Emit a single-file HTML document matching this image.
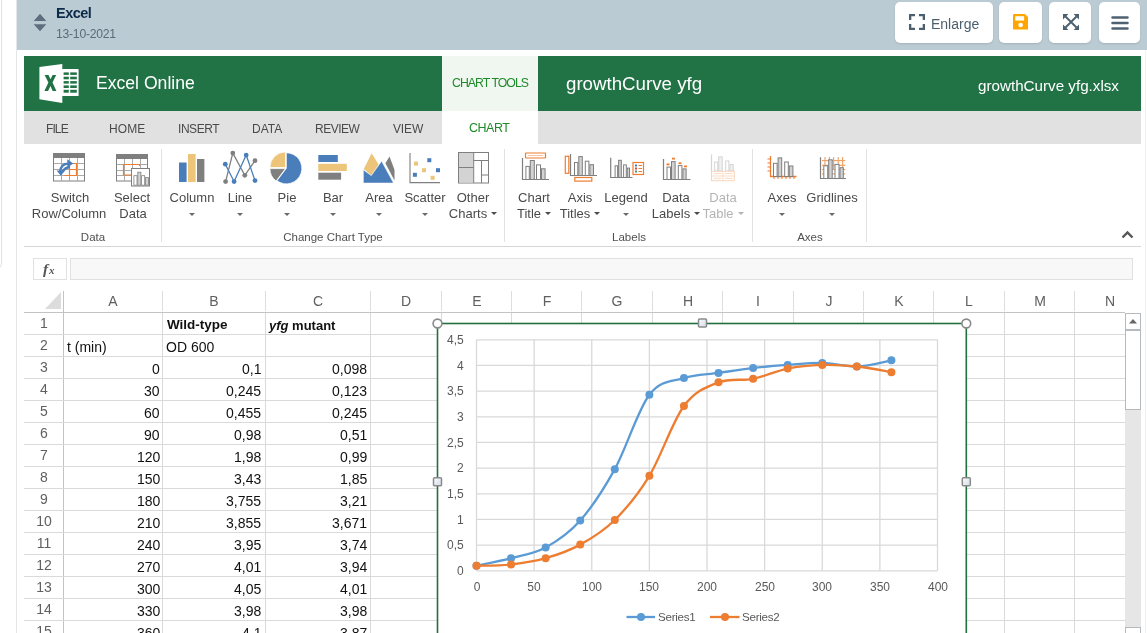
<!DOCTYPE html>
<html><head><meta charset="utf-8"><style>
html,body{margin:0;padding:0;width:1147px;height:633px;overflow:hidden;background:#fff;position:relative}
body{font-family:"Liberation Sans", sans-serif}
.t{will-change:transform}
.t{position:absolute;white-space:nowrap}
</style></head><body>
<div style="position:absolute;left:-8px;top:-5px;width:8px;height:271px;border:1px solid #dde2e5;border-radius:4px;background:#fff"></div>
<div style="position:absolute;left:16px;top:0px;width:1px;height:633px;background:#e3e7ea"></div>
<div style="position:absolute;left:17px;top:0px;width:1130px;height:50px;background:#bbcbd3"></div>
<svg style="position:absolute;left:33px;top:13px" width="14" height="19" viewBox="0 0 14 19"><path d="M0.7 8 L7 0.8 L13.3 8 Z" fill="#5d6f7e"/><path d="M0.7 11.2 L7 18.2 L13.3 11.2 Z" fill="#5d6f7e"/></svg>
<div class="t" style="left:55.5px;top:6.4px;font-size:14.5px;line-height:14.5px;color:#0c2b49;font-weight:700;letter-spacing:-0.5px">Excel</div>
<div class="t" style="left:55.5px;top:28.2px;font-size:12.2px;line-height:12.2px;color:#5b6b7a;font-weight:400;letter-spacing:-0.25px">13-10-2021</div>
<div style="position:absolute;left:895px;top:2px;width:98px;height:41px;background:#fff;border-radius:5px;box-shadow:0 1px 2px rgba(0,0,0,0.12)"></div>
<div style="position:absolute;left:999px;top:2px;width:43px;height:41px;background:#fff;border-radius:5px;box-shadow:0 1px 2px rgba(0,0,0,0.12)"></div>
<div style="position:absolute;left:1049px;top:2px;width:42px;height:41px;background:#fff;border-radius:5px;box-shadow:0 1px 2px rgba(0,0,0,0.12)"></div>
<div style="position:absolute;left:1099px;top:2px;width:41px;height:41px;background:#fff;border-radius:5px;box-shadow:0 1px 2px rgba(0,0,0,0.12)"></div>
<svg style="position:absolute;left:909px;top:14px" width="16" height="16" viewBox="0 0 16 16" fill="none" stroke="#4b5f6e" stroke-width="2.3"><path d="M1.15 6V1.15H6"/><path d="M10 1.15H14.85V6"/><path d="M14.85 10V14.85H10"/><path d="M6 14.85H1.15V10"/></svg>
<div class="t" style="left:931.0px;top:16.9px;font-size:14px;line-height:14px;color:#4b5f6e;font-weight:400;">Enlarge</div>
<svg style="position:absolute;left:1012.8px;top:14.3px" width="15.5" height="15.5" viewBox="0 0 16 16"><path d="M1.3 0H12.3L16 3.7V14.7Q16 16 14.7 16H1.3Q0 16 0 14.7V1.3Q0 0 1.3 0Z" fill="#ffa500"/><rect x="2.3" y="2.3" width="9.2" height="4.5" fill="#fff"/><circle cx="7.9" cy="11.4" r="2.4" fill="#fff"/></svg>
<svg style="position:absolute;left:1063px;top:14px" width="16" height="16" viewBox="0 0 16 16" fill="#4b5f6e"><path d="M2.5 2.5L13.5 13.5M13.5 2.5L2.5 13.5" stroke="#4b5f6e" stroke-width="1.9"/><path d="M0 0H5.4L0 5.4Z"/><path d="M16 0H10.6L16 5.4Z"/><path d="M0 16H5.4L0 10.6Z"/><path d="M16 16H10.6L16 10.6Z"/></svg>
<svg style="position:absolute;left:1111px;top:15px" width="18" height="16" viewBox="0 0 18 16" stroke="#4d6272" stroke-width="2.5" stroke-linecap="round"><path d="M1.5 2.5H16.5M1.5 8H16.5M1.5 13.5H16.5"/></svg>
<div style="position:absolute;left:1145px;top:50px;width:1px;height:583px;background:#eef0f2"></div>
<div style="position:absolute;left:24px;top:56px;width:1117px;height:55px;background:#217346"></div>
<svg style="position:absolute;left:38px;top:63px" width="42" height="41" viewBox="0 0 42 41">
<rect x="24" y="6.1" width="16.6" height="27" rx="0.6" fill="#fff"/>
<g fill="#217346"><rect x="25.6" y="9.4" width="5.2" height="2.5"/><rect x="32.2" y="9.4" width="6.6" height="2.5"/><rect x="25.6" y="13.7" width="5.2" height="2.6"/><rect x="32.2" y="13.7" width="6.6" height="2.6"/><rect x="25.6" y="18.1" width="5.2" height="2.5"/><rect x="32.2" y="18.1" width="6.6" height="2.5"/><rect x="25.6" y="22.4" width="5.2" height="2.6"/><rect x="32.2" y="22.4" width="6.6" height="2.6"/><rect x="25.6" y="26.8" width="5.2" height="2.9"/><rect x="32.2" y="26.8" width="6.6" height="2.9"/></g>
<path d="M1.4 4 L24.3 1 V40 L1.4 36.2 Z" fill="#fff"/>
<path fill="#217346" d="M6.6 11.9H10.5L12.5 16.3L14.6 11.9H18.2L14.5 19.4L18.4 27.9H14.7L12.4 23L10.1 27.9H6.4L10.4 19.4Z"/>
</svg>
<div class="t" style="left:96.0px;top:74.8px;font-size:17.6px;line-height:17.6px;color:#fff;font-weight:400;">Excel Online</div>
<div style="position:absolute;left:442px;top:56px;width:96px;height:55px;background:#f0f7f0"></div>
<div class="t" style="left:452.0px;top:77.0px;font-size:12.3px;line-height:12.3px;color:#1f8a2a;font-weight:400;letter-spacing:-0.95px">CHART TOOLS</div>
<div class="t" style="left:566.0px;top:75.1px;font-size:18.7px;line-height:18.7px;color:#fff;font-weight:400;">growthCurve yfg</div>
<div class="t" style="right:28.0px;text-align:right;top:78.1px;font-size:15.2px;line-height:15.2px;color:#fff;font-weight:400;">growthCurve yfg.xlsx</div>
<div style="position:absolute;left:24px;top:111px;width:1117px;height:33px;background:#e1e1e1"></div>
<div class="t" style="left:45.5px;top:123.4px;font-size:12px;line-height:12px;color:#4a4a4a;font-weight:400;letter-spacing:-0.9px">FILE</div>
<div class="t" style="left:109.3px;top:123.4px;font-size:12px;line-height:12px;color:#4a4a4a;font-weight:400;letter-spacing:0.1px">HOME</div>
<div class="t" style="left:178.3px;top:123.4px;font-size:12px;line-height:12px;color:#4a4a4a;font-weight:400;letter-spacing:-0.45px">INSERT</div>
<div class="t" style="left:252.3px;top:123.4px;font-size:12px;line-height:12px;color:#4a4a4a;font-weight:400;letter-spacing:0px">DATA</div>
<div class="t" style="left:315.3px;top:123.4px;font-size:12px;line-height:12px;color:#4a4a4a;font-weight:400;letter-spacing:-0.5px">REVIEW</div>
<div class="t" style="left:392.6px;top:123.4px;font-size:12px;line-height:12px;color:#4a4a4a;font-weight:400;letter-spacing:-0.15px">VIEW</div>
<div style="position:absolute;left:442px;top:111px;width:96px;height:33px;background:#fff"></div>
<div class="t" style="left:469.0px;top:122.4px;font-size:12.5px;line-height:12.5px;color:#1f8a2a;font-weight:400;letter-spacing:-0.5px">CHART</div>
<div style="position:absolute;left:24px;top:246px;width:1117px;height:1px;background:#d6d6d6"></div>
<div style="position:absolute;left:161px;top:149px;width:1px;height:93px;background:#e1e1e1"></div>
<div style="position:absolute;left:504px;top:149px;width:1px;height:93px;background:#e1e1e1"></div>
<div style="position:absolute;left:752px;top:149px;width:1px;height:93px;background:#e1e1e1"></div>
<div style="position:absolute;left:866px;top:149px;width:1px;height:93px;background:#e1e1e1"></div>
<div class="t" style="left:-230.5px;width:600px;text-align:center;top:190.9px;font-size:13px;line-height:13px;color:#4a4a4a;font-weight:400;">Switch</div>
<div class="t" style="left:-231.0px;width:600px;text-align:center;top:206.9px;font-size:13px;line-height:13px;color:#4a4a4a;font-weight:400;">Row/Column</div>
<div class="t" style="left:-168.0px;width:600px;text-align:center;top:190.9px;font-size:13px;line-height:13px;color:#4a4a4a;font-weight:400;">Select</div>
<div class="t" style="left:-167.5px;width:600px;text-align:center;top:206.9px;font-size:13px;line-height:13px;color:#4a4a4a;font-weight:400;">Data</div>
<div class="t" style="left:-207.5px;width:600px;text-align:center;top:232.2px;font-size:11.5px;line-height:11.5px;color:#505050;font-weight:400;">Data</div>
<div class="t" style="left:-108.0px;width:600px;text-align:center;top:190.9px;font-size:13px;line-height:13px;color:#4a4a4a;font-weight:400;">Column</div>
<div style="position:absolute;left:189px;top:213.1px;width:0px;height:0px;border-left:3px solid transparent;border-right:3px solid transparent;border-top:3px solid #6a6a6a"></div>
<div class="t" style="left:-60.0px;width:600px;text-align:center;top:190.9px;font-size:13px;line-height:13px;color:#4a4a4a;font-weight:400;">Line</div>
<div style="position:absolute;left:237px;top:213.1px;width:0px;height:0px;border-left:3px solid transparent;border-right:3px solid transparent;border-top:3px solid #6a6a6a"></div>
<div class="t" style="left:-13.4px;width:600px;text-align:center;top:190.9px;font-size:13px;line-height:13px;color:#4a4a4a;font-weight:400;">Pie</div>
<div style="position:absolute;left:283.6px;top:213.1px;width:0px;height:0px;border-left:3px solid transparent;border-right:3px solid transparent;border-top:3px solid #6a6a6a"></div>
<div class="t" style="left:33.0px;width:600px;text-align:center;top:190.9px;font-size:13px;line-height:13px;color:#4a4a4a;font-weight:400;">Bar</div>
<div style="position:absolute;left:330px;top:213.1px;width:0px;height:0px;border-left:3px solid transparent;border-right:3px solid transparent;border-top:3px solid #6a6a6a"></div>
<div class="t" style="left:79.0px;width:600px;text-align:center;top:190.9px;font-size:13px;line-height:13px;color:#4a4a4a;font-weight:400;">Area</div>
<div style="position:absolute;left:376px;top:213.1px;width:0px;height:0px;border-left:3px solid transparent;border-right:3px solid transparent;border-top:3px solid #6a6a6a"></div>
<div class="t" style="left:125.0px;width:600px;text-align:center;top:190.9px;font-size:13px;line-height:13px;color:#4a4a4a;font-weight:400;">Scatter</div>
<div style="position:absolute;left:422px;top:213.1px;width:0px;height:0px;border-left:3px solid transparent;border-right:3px solid transparent;border-top:3px solid #6a6a6a"></div>
<div class="t" style="left:173.4px;width:600px;text-align:center;top:190.9px;font-size:13px;line-height:13px;color:#4a4a4a;font-weight:400;">Other</div>
<div class="t" style="left:172.8px;width:600px;text-align:center;top:206.9px;font-size:13px;line-height:13px;color:#4a4a4a;font-weight:400;">Charts<span style="display:inline-block;width:0;height:0;border-left:3px solid transparent;border-right:3px solid transparent;border-top:3px solid #4a4a4a;vertical-align:middle;margin-left:4px;position:relative;top:-1px"></span></div>
<div class="t" style="left:33.0px;width:600px;text-align:center;top:232.2px;font-size:11.5px;line-height:11.5px;color:#505050;font-weight:400;">Change Chart Type</div>
<div class="t" style="left:233.6px;width:600px;text-align:center;top:190.9px;font-size:13px;line-height:13px;color:#4a4a4a;font-weight:400;">Chart</div>
<div class="t" style="left:234.0px;width:600px;text-align:center;top:206.9px;font-size:13px;line-height:13px;color:#4a4a4a;font-weight:400;">Title<span style="display:inline-block;width:0;height:0;border-left:3px solid transparent;border-right:3px solid transparent;border-top:3px solid #4a4a4a;vertical-align:middle;margin-left:4px;position:relative;top:-1px"></span></div>
<div class="t" style="left:279.8px;width:600px;text-align:center;top:190.9px;font-size:13px;line-height:13px;color:#4a4a4a;font-weight:400;">Axis</div>
<div class="t" style="left:280.2px;width:600px;text-align:center;top:206.9px;font-size:13px;line-height:13px;color:#4a4a4a;font-weight:400;">Titles<span style="display:inline-block;width:0;height:0;border-left:3px solid transparent;border-right:3px solid transparent;border-top:3px solid #4a4a4a;vertical-align:middle;margin-left:4px;position:relative;top:-1px"></span></div>
<div class="t" style="left:326.3px;width:600px;text-align:center;top:190.9px;font-size:13px;line-height:13px;color:#4a4a4a;font-weight:400;">Legend</div>
<div style="position:absolute;left:623.3px;top:213.1px;width:0px;height:0px;border-left:3px solid transparent;border-right:3px solid transparent;border-top:3px solid #6a6a6a"></div>
<div class="t" style="left:375.6px;width:600px;text-align:center;top:190.9px;font-size:13px;line-height:13px;color:#4a4a4a;font-weight:400;">Data</div>
<div class="t" style="left:375.6px;width:600px;text-align:center;top:206.9px;font-size:13px;line-height:13px;color:#4a4a4a;font-weight:400;">Labels<span style="display:inline-block;width:0;height:0;border-left:3px solid transparent;border-right:3px solid transparent;border-top:3px solid #4a4a4a;vertical-align:middle;margin-left:4px;position:relative;top:-1px"></span></div>
<div class="t" style="left:423.3px;width:600px;text-align:center;top:190.9px;font-size:13px;line-height:13px;color:#b4b4b4;font-weight:400;">Data</div>
<div class="t" style="left:423.3px;width:600px;text-align:center;top:206.9px;font-size:13px;line-height:13px;color:#b4b4b4;font-weight:400;">Table<span style="display:inline-block;width:0;height:0;border-left:3px solid transparent;border-right:3px solid transparent;border-top:3px solid #b4b4b4;vertical-align:middle;margin-left:4px;position:relative;top:-1px"></span></div>
<div class="t" style="left:328.8px;width:600px;text-align:center;top:232.2px;font-size:11.5px;line-height:11.5px;color:#505050;font-weight:400;">Labels</div>
<div class="t" style="left:481.6px;width:600px;text-align:center;top:190.9px;font-size:13px;line-height:13px;color:#4a4a4a;font-weight:400;">Axes</div>
<div style="position:absolute;left:778.6px;top:213.1px;width:0px;height:0px;border-left:3px solid transparent;border-right:3px solid transparent;border-top:3px solid #6a6a6a"></div>
<div class="t" style="left:532.0px;width:600px;text-align:center;top:190.9px;font-size:13px;line-height:13px;color:#4a4a4a;font-weight:400;">Gridlines</div>
<div style="position:absolute;left:829px;top:213.1px;width:0px;height:0px;border-left:3px solid transparent;border-right:3px solid transparent;border-top:3px solid #6a6a6a"></div>
<div class="t" style="left:509.7px;width:600px;text-align:center;top:232.2px;font-size:11.5px;line-height:11.5px;color:#505050;font-weight:400;">Axes</div>
<svg style="position:absolute;left:1121px;top:229px" width="13" height="10" viewBox="0 0 13 10"><path d="M1.5 8.5L6.5 3.5L11.5 8.5" fill="none" stroke="#555" stroke-width="2.4"/></svg>
<svg style="position:absolute;left:0;top:0" width="1147" height="200" viewBox="0 0 1147 200">
<rect x="53.5" y="153.5" width="31" height="27.5" fill="#fff" stroke="#7f7f7f" stroke-width="1"/>
<rect x="53" y="153" width="32" height="5" fill="#7f7f7f"/>
<line x1="61.5" y1="158" x2="61.5" y2="181" stroke="#ababab" stroke-width="1"/>
<line x1="69.5" y1="158" x2="69.5" y2="181" stroke="#ababab" stroke-width="1"/>
<line x1="77.5" y1="158" x2="77.5" y2="181" stroke="#ababab" stroke-width="1"/>
<line x1="54" y1="163.5" x2="84" y2="163.5" stroke="#ababab" stroke-width="1"/>
<line x1="54" y1="169.5" x2="84" y2="169.5" stroke="#ababab" stroke-width="1"/>
<line x1="54" y1="175.5" x2="84" y2="175.5" stroke="#ababab" stroke-width="1"/>
<path d="M69.5 163.5H76.5V175.5H64.5M69.5 163.5V175.5M69.5 169.5H76.5" fill="none" stroke="#ed7d31" stroke-width="1.2"/>
<path d="M60.2 171.5 Q60.9 163.6 68.5 163.6" fill="none" stroke="#4a7ebb" stroke-width="2.3"/>
<path d="M67.3 159.3L73.3 163.5L67.3 167.6Z" fill="#4a7ebb"/>
<path d="M70 167 Q65 167.4 62.3 172" fill="none" stroke="#4a7ebb" stroke-width="2.3"/>
<path d="M56.6 170.6L60.9 175.8L65 170.6Z" fill="#4a7ebb"/>
<rect x="116.5" y="154.5" width="31" height="26.5" fill="#fff" stroke="#7f7f7f" stroke-width="1"/>
<rect x="116" y="154" width="32" height="5" fill="#7f7f7f"/>
<line x1="124.5" y1="159" x2="124.5" y2="181" stroke="#ababab" stroke-width="1"/>
<line x1="132.5" y1="159" x2="132.5" y2="181" stroke="#ababab" stroke-width="1"/>
<line x1="140.5" y1="159" x2="140.5" y2="181" stroke="#ababab" stroke-width="1"/>
<line x1="117" y1="164.5" x2="147" y2="164.5" stroke="#ababab" stroke-width="1"/>
<line x1="117" y1="170.5" x2="147" y2="170.5" stroke="#ababab" stroke-width="1"/>
<line x1="117" y1="175.5" x2="147" y2="175.5" stroke="#ababab" stroke-width="1"/>
<path d="M139.5 166V164.5H123.5V175H131" fill="none" stroke="#ed7d31" stroke-width="1.2"/>
<rect x="131.5" y="168.5" width="18" height="17.5" fill="#fff" stroke="#7f7f7f" stroke-width="1"/>
<rect x="133.9" y="175.70000000000002" width="3.1" height="9.5" fill="#fff" stroke="#7f7f7f" stroke-width="0.8"/>
<rect x="137.8" y="172.20000000000002" width="3.1" height="13.0" fill="#d3d3d3" stroke="#7f7f7f" stroke-width="0.8"/>
<rect x="141.6" y="175.70000000000002" width="3.1" height="9.5" fill="#fff" stroke="#7f7f7f" stroke-width="0.8"/>
<rect x="145.4" y="177.6" width="3.1" height="7.600000000000023" fill="#d3d3d3" stroke="#7f7f7f" stroke-width="0.8"/>
<rect x="179" y="162.5" width="7.6" height="19.5" fill="#4a7ebb"/>
<rect x="188" y="154" width="7.6" height="28" fill="#ecc57b"/>
<rect x="197" y="159" width="7.4" height="23" fill="#7f7f7f"/>
<polyline points="225.6,181.6 232.8,153.1 244.8,175.3 255,160.7" fill="none" stroke="#7f7f7f" stroke-width="1.3"/>
<circle cx="225.6" cy="181.6" r="2.4" fill="#7f7f7f"/>
<circle cx="232.8" cy="153.1" r="2.4" fill="#7f7f7f"/>
<circle cx="244.8" cy="175.3" r="2.4" fill="#7f7f7f"/>
<circle cx="255" cy="160.7" r="2.4" fill="#7f7f7f"/>
<polyline points="225.3,164.2 234.1,181.6 246.2,155.1 255,180.6" fill="none" stroke="#4a7ebb" stroke-width="1.3"/>
<circle cx="225.3" cy="164.2" r="2.4" fill="#4a7ebb"/>
<circle cx="234.1" cy="181.6" r="2.4" fill="#4a7ebb"/>
<circle cx="246.2" cy="155.1" r="2.4" fill="#4a7ebb"/>
<circle cx="255" cy="180.6" r="2.4" fill="#4a7ebb"/>
<path d="M286.3 168.3 L286.30 152.70 A15.6 15.6 0 1 1 276.91 180.76 Z" fill="#4a7ebb" stroke="#fff" stroke-width="0.8"/>
<path d="M285.5 168.60000000000002 L276.11 181.06 A15.6 15.6 0 0 1 269.90 168.60 Z" fill="#7f7f7f" stroke="#fff" stroke-width="0.8"/>
<path d="M285.5 167.5 L269.90 167.50 A15.6 15.6 0 0 1 285.50 151.90 Z" fill="#ecc57b" stroke="#fff" stroke-width="0.8"/>
<rect x="318.3" y="155" width="19.5" height="7" fill="#4a7ebb"/>
<rect x="318.3" y="163.8" width="28.5" height="7.2" fill="#ecc57b"/>
<rect x="318.3" y="172.7" width="22.8" height="7" fill="#7f7f7f"/>
<path d="M385.4 163.2L389.5 156.6L394.5 169.8V180.6Z" fill="#7f7f7f"/>
<path d="M363.8 169L371.6 153.3L378.6 164.5L371.3 175.6Z" fill="#ecc57b"/>
<path d="M363.3 169.8L371.3 175.6L381.6 161.1L393.6 183.1H363.3Z" fill="#4a7ebb" stroke="#fff" stroke-width="0.6"/>
<path d="M410 153V182.6H440" fill="none" stroke="#7f7f7f" stroke-width="1.1"/>
<rect x="427.3" y="158.2" width="4" height="4" fill="#4a7ebb"/>
<rect x="414" y="161.6" width="4" height="4" fill="#ecc57b"/>
<rect x="422" y="168.2" width="4" height="4" fill="#ecc57b"/>
<rect x="436" y="168.2" width="4" height="4" fill="#4a7ebb"/>
<rect x="412.9" y="172.8" width="4" height="4" fill="#4a7ebb"/>
<rect x="430.6" y="175.8" width="4" height="4" fill="#ecc57b"/>
<rect x="458.5" y="152.5" width="30" height="30.5" fill="#fff" stroke="#7f7f7f" stroke-width="1"/>
<rect x="459" y="153" width="14.5" height="14" fill="#d3d3d3"/><rect x="459" y="168" width="14.5" height="14.5" fill="#d3d3d3"/>
<path d="M473.7 152.5V183M458.5 167.5H473.7M473.7 160.5H488.5M481.5 160.5V183M481.5 175H488.5" fill="none" stroke="#7f7f7f" stroke-width="1"/>
<rect x="525.5" y="153" width="20" height="5" rx="0.5" fill="#fff" stroke="#ed7d31" stroke-width="1.2"/><line x1="528" y1="155.5" x2="543" y2="155.5" stroke="#f5c6a5" stroke-width="1"/>
<path d="M522.5 158V179.5H549" fill="none" stroke="#7f7f7f" stroke-width="1.2"/>
<rect x="525.9" y="166.4" width="3.3999999999999773" height="13.099999999999994" fill="#fff" stroke="#7f7f7f" stroke-width="1"/>
<rect x="530.3" y="160.5" width="4.0" height="19.0" fill="#d3d3d3" stroke="#7f7f7f" stroke-width="1"/>
<rect x="536.5" y="164.9" width="4" height="14.599999999999994" fill="#fff" stroke="#7f7f7f" stroke-width="1"/>
<rect x="541.5" y="168.8" width="3.6000000000000227" height="10.699999999999989" fill="#d3d3d3" stroke="#7f7f7f" stroke-width="1"/>
<rect x="565.3" y="156.3" width="3.5" height="17" fill="#fff" stroke="#ed7d31" stroke-width="1.2"/>
<path d="M570.5 154.1V175.5H597" fill="none" stroke="#7f7f7f" stroke-width="1.2"/>
<rect x="574.5" y="162.5" width="3.2999999999999545" height="13.0" fill="#fff" stroke="#7f7f7f" stroke-width="1"/>
<rect x="578.8" y="156.6" width="3.5" height="18.900000000000006" fill="#d3d3d3" stroke="#7f7f7f" stroke-width="1"/>
<rect x="585.3" y="161.2" width="3.6000000000000227" height="14.300000000000011" fill="#fff" stroke="#7f7f7f" stroke-width="1"/>
<rect x="589.9" y="164.7" width="3.6000000000000227" height="10.800000000000011" fill="#d3d3d3" stroke="#7f7f7f" stroke-width="1"/>
<rect x="574.8" y="177.5" width="17" height="3.6" fill="#fff" stroke="#ed7d31" stroke-width="1.2"/>
<path d="M610.7 157.8V177.5H632.5" fill="none" stroke="#7f7f7f" stroke-width="1.2"/>
<rect x="615.1" y="165.8" width="2.5" height="11.699999999999989" fill="#fff" stroke="#7f7f7f" stroke-width="1"/>
<rect x="618.6" y="160.3" width="2.699999999999932" height="17.19999999999999" fill="#d3d3d3" stroke="#7f7f7f" stroke-width="1"/>
<rect x="623.6" y="164.9" width="2.699999999999932" height="12.599999999999994" fill="#fff" stroke="#7f7f7f" stroke-width="1"/>
<rect x="627.3" y="168.1" width="2.2000000000000455" height="9.400000000000006" fill="#d3d3d3" stroke="#7f7f7f" stroke-width="1"/>
<rect x="633" y="162.5" width="10.5" height="12" fill="#fff" stroke="#ed7d31" stroke-width="1.2"/>
<rect x="635" y="164.5" width="2" height="2" fill="#3f78c2"/><line x1="638.5" y1="165.5" x2="642" y2="165.5" stroke="#ed7d31" stroke-width="1"/>
<rect x="635" y="167.5" width="2" height="2" fill="#d0473f"/><line x1="638.5" y1="168.5" x2="642" y2="168.5" stroke="#ed7d31" stroke-width="1"/>
<rect x="635" y="170.5" width="2" height="2" fill="#3f9a73"/><line x1="638.5" y1="171.5" x2="642" y2="171.5" stroke="#ed7d31" stroke-width="1"/>
<path d="M663.5 159.1V179.5H690.5" fill="none" stroke="#7f7f7f" stroke-width="1.2"/>
<rect x="667.0" y="167.1" width="3.5" height="12.400000000000006" fill="#fff" stroke="#7f7f7f" stroke-width="1"/>
<rect x="671.5" y="161.6" width="3.6000000000000227" height="17.900000000000006" fill="#d3d3d3" stroke="#7f7f7f" stroke-width="1"/>
<rect x="678.3" y="165.6" width="3.6000000000000227" height="13.900000000000006" fill="#fff" stroke="#7f7f7f" stroke-width="1"/>
<rect x="682.9" y="168.9" width="3.2000000000000455" height="10.599999999999994" fill="#d3d3d3" stroke="#7f7f7f" stroke-width="1"/>
<rect x="666.5" y="163.5" width="3" height="1.8" fill="#ed7d31"/>
<rect x="672" y="157.7" width="3" height="1.8" fill="#ed7d31"/>
<rect x="678.5" y="162.3" width="3" height="1.8" fill="#ed7d31"/>
<rect x="684" y="165.5" width="3" height="1.8" fill="#ed7d31"/>
<g opacity="0.33">
<path d="M711.5 154.4V171H711.5" fill="none" stroke="#7f7f7f" stroke-width="1.2"/>
<rect x="714.6" y="162.1" width="3.1000000000000227" height="8.900000000000006" fill="#fff" stroke="#7f7f7f" stroke-width="1"/>
<rect x="718.7" y="156.9" width="3.5" height="14.099999999999994" fill="#d3d3d3" stroke="#7f7f7f" stroke-width="1"/>
<rect x="725.7" y="161.0" width="3.199999999999932" height="10.0" fill="#fff" stroke="#7f7f7f" stroke-width="1"/>
<rect x="729.9" y="164.6" width="3.300000000000068" height="6.400000000000006" fill="#d3d3d3" stroke="#7f7f7f" stroke-width="1"/>
<rect x="711.5" y="171.3" width="22.8" height="9.4" fill="#fff" stroke="#ed7d31" stroke-width="1"/><line x1="722.9" y1="171.3" x2="722.9" y2="180.7" stroke="#ed7d31" stroke-width="0.8"/><line x1="711.5" y1="176" x2="734.3" y2="176" stroke="#ed7d31" stroke-width="0.8"/>
<line x1="713.5" y1="173.6" x2="721.5" y2="173.6" stroke="#ed7d31" stroke-width="0.9"/>
<line x1="724.5" y1="173.6" x2="732.5" y2="173.6" stroke="#ed7d31" stroke-width="0.9"/>
<line x1="713.5" y1="178.3" x2="721.5" y2="178.3" stroke="#ed7d31" stroke-width="0.9"/>
<line x1="724.5" y1="178.3" x2="732.5" y2="178.3" stroke="#ed7d31" stroke-width="0.9"/>
</g>
<path d="M770.5 156V176.5H796.5" fill="none" stroke="#ed7d31" stroke-width="1.3"/>
<line x1="767.5" y1="159" x2="770.5" y2="159" stroke="#ed7d31" stroke-width="1"/>
<line x1="767.5" y1="163" x2="770.5" y2="163" stroke="#ed7d31" stroke-width="1"/>
<line x1="767.5" y1="167" x2="770.5" y2="167" stroke="#ed7d31" stroke-width="1"/>
<line x1="767.5" y1="171" x2="770.5" y2="171" stroke="#ed7d31" stroke-width="1"/>
<line x1="774" y1="176.5" x2="774" y2="179" stroke="#ed7d31" stroke-width="1"/>
<line x1="778" y1="176.5" x2="778" y2="179" stroke="#ed7d31" stroke-width="1"/>
<line x1="782" y1="176.5" x2="782" y2="179" stroke="#ed7d31" stroke-width="1"/>
<line x1="786" y1="176.5" x2="786" y2="179" stroke="#ed7d31" stroke-width="1"/>
<line x1="790" y1="176.5" x2="790" y2="179" stroke="#ed7d31" stroke-width="1"/>
<line x1="794" y1="176.5" x2="794" y2="179" stroke="#ed7d31" stroke-width="1"/>
<rect x="773.5" y="163.3" width="3.6000000000000227" height="13.199999999999989" fill="#fff" stroke="#7f7f7f" stroke-width="1"/>
<rect x="778.1" y="157.9" width="3.6000000000000227" height="18.599999999999994" fill="#d3d3d3" stroke="#7f7f7f" stroke-width="1"/>
<rect x="784.7" y="162.0" width="3.599999999999909" height="14.5" fill="#fff" stroke="#7f7f7f" stroke-width="1"/>
<rect x="789.3" y="166.0" width="3.6000000000000227" height="10.5" fill="#d3d3d3" stroke="#7f7f7f" stroke-width="1"/>
<line x1="822" y1="160.6" x2="845.3" y2="160.6" stroke="#f0a060" stroke-width="1.1"/>
<line x1="822" y1="165.3" x2="845.3" y2="165.3" stroke="#f0a060" stroke-width="1.1"/>
<line x1="822" y1="169.5" x2="845.3" y2="169.5" stroke="#f0a060" stroke-width="1.1"/>
<line x1="822" y1="173.9" x2="845.3" y2="173.9" stroke="#f0a060" stroke-width="1.1"/>
<line x1="825" y1="157" x2="825" y2="170" stroke="#f0a060" stroke-width="1.1"/>
<line x1="829.4" y1="157" x2="829.4" y2="170" stroke="#f0a060" stroke-width="1.1"/>
<line x1="833.6" y1="157" x2="833.6" y2="170" stroke="#f0a060" stroke-width="1.1"/>
<line x1="838.2" y1="157" x2="838.2" y2="170" stroke="#f0a060" stroke-width="1.1"/>
<line x1="842.6" y1="157" x2="842.6" y2="170" stroke="#f0a060" stroke-width="1.1"/>
<path d="M820.5 157.3V178.5H846" fill="none" stroke="#7f7f7f" stroke-width="1.2"/>
<rect x="823.8" y="165.8" width="3.900000000000091" height="12.699999999999989" fill="#fff" stroke="#7f7f7f" stroke-width="1"/>
<rect x="828.7" y="159.8" width="3.5" height="18.69999999999999" fill="#d3d3d3" stroke="#7f7f7f" stroke-width="1"/>
<rect x="835.0" y="164.4" width="4.0" height="14.099999999999994" fill="#fff" stroke="#7f7f7f" stroke-width="1"/>
<rect x="840.0" y="167.7" width="3.2999999999999545" height="10.800000000000011" fill="#d3d3d3" stroke="#7f7f7f" stroke-width="1"/>
</svg>
<div style="position:absolute;left:33px;top:258px;width:32px;height:20px;border:1px solid #e1e1e1;background:#fff"></div>
<div class="t" style="left:43.0px;top:260.8px;font-size:15.5px;line-height:15.5px;color:#555;font-weight:700;font-family:'Liberation Serif',serif"><i>f</i></div>
<div class="t" style="left:49.0px;top:264.6px;font-size:11px;line-height:11px;color:#555;font-weight:700;font-family:'Liberation Serif',serif"><i>x</i></div>
<div style="position:absolute;left:70px;top:258px;width:1061px;height:20px;border:1px solid #e1e1e1;background:#f8f8f8"></div>
<div style="position:absolute;left:162px;top:291px;width:1px;height:20px;background:#dedede"></div>
<div style="position:absolute;left:265px;top:291px;width:1px;height:20px;background:#dedede"></div>
<div style="position:absolute;left:370px;top:291px;width:1px;height:20px;background:#dedede"></div>
<div style="position:absolute;left:441px;top:291px;width:1px;height:20px;background:#dedede"></div>
<div style="position:absolute;left:511px;top:291px;width:1px;height:20px;background:#dedede"></div>
<div style="position:absolute;left:581px;top:291px;width:1px;height:20px;background:#dedede"></div>
<div style="position:absolute;left:652px;top:291px;width:1px;height:20px;background:#dedede"></div>
<div style="position:absolute;left:722px;top:291px;width:1px;height:20px;background:#dedede"></div>
<div style="position:absolute;left:793px;top:291px;width:1px;height:20px;background:#dedede"></div>
<div style="position:absolute;left:863px;top:291px;width:1px;height:20px;background:#dedede"></div>
<div style="position:absolute;left:933px;top:291px;width:1px;height:20px;background:#dedede"></div>
<div style="position:absolute;left:1004px;top:291px;width:1px;height:20px;background:#dedede"></div>
<div style="position:absolute;left:1074px;top:291px;width:1px;height:20px;background:#dedede"></div>
<div style="position:absolute;left:63px;top:291px;width:1px;height:342px;background:#c3c3c3"></div>
<div style="position:absolute;left:24px;top:312px;width:1101px;height:1px;background:#c3c3c3"></div>
<div style="position:absolute;left:162px;top:313px;width:1px;height:320px;background:#dadada"></div>
<div style="position:absolute;left:265px;top:313px;width:1px;height:320px;background:#dadada"></div>
<div style="position:absolute;left:370px;top:313px;width:1px;height:320px;background:#dadada"></div>
<div style="position:absolute;left:441px;top:313px;width:1px;height:320px;background:#dadada"></div>
<div style="position:absolute;left:511px;top:313px;width:1px;height:320px;background:#dadada"></div>
<div style="position:absolute;left:581px;top:313px;width:1px;height:320px;background:#dadada"></div>
<div style="position:absolute;left:652px;top:313px;width:1px;height:320px;background:#dadada"></div>
<div style="position:absolute;left:722px;top:313px;width:1px;height:320px;background:#dadada"></div>
<div style="position:absolute;left:793px;top:313px;width:1px;height:320px;background:#dadada"></div>
<div style="position:absolute;left:863px;top:313px;width:1px;height:320px;background:#dadada"></div>
<div style="position:absolute;left:933px;top:313px;width:1px;height:320px;background:#dadada"></div>
<div style="position:absolute;left:1004px;top:313px;width:1px;height:320px;background:#dadada"></div>
<div style="position:absolute;left:1074px;top:313px;width:1px;height:320px;background:#dadada"></div>
<div style="position:absolute;left:24px;top:334px;width:1101px;height:1px;background:#dadada"></div>
<div style="position:absolute;left:24px;top:356px;width:1101px;height:1px;background:#dadada"></div>
<div style="position:absolute;left:24px;top:378px;width:1101px;height:1px;background:#dadada"></div>
<div style="position:absolute;left:24px;top:400px;width:1101px;height:1px;background:#dadada"></div>
<div style="position:absolute;left:24px;top:422px;width:1101px;height:1px;background:#dadada"></div>
<div style="position:absolute;left:24px;top:444px;width:1101px;height:1px;background:#dadada"></div>
<div style="position:absolute;left:24px;top:466px;width:1101px;height:1px;background:#dadada"></div>
<div style="position:absolute;left:24px;top:488px;width:1101px;height:1px;background:#dadada"></div>
<div style="position:absolute;left:24px;top:510px;width:1101px;height:1px;background:#dadada"></div>
<div style="position:absolute;left:24px;top:532px;width:1101px;height:1px;background:#dadada"></div>
<div style="position:absolute;left:24px;top:554px;width:1101px;height:1px;background:#dadada"></div>
<div style="position:absolute;left:24px;top:576px;width:1101px;height:1px;background:#dadada"></div>
<div style="position:absolute;left:24px;top:598px;width:1101px;height:1px;background:#dadada"></div>
<div style="position:absolute;left:24px;top:620px;width:1101px;height:1px;background:#dadada"></div>
<svg style="position:absolute;left:45px;top:292px" width="16" height="17" viewBox="0 0 16 17"><path d="M16 0V17H0Z" fill="#dcdcdc"/></svg>
<div class="t" style="left:-187.0px;width:600px;text-align:center;top:294.1px;font-size:14px;line-height:14px;color:#606060;font-weight:400;">A</div>
<div class="t" style="left:-86.0px;width:600px;text-align:center;top:294.1px;font-size:14px;line-height:14px;color:#606060;font-weight:400;">B</div>
<div class="t" style="left:18.0px;width:600px;text-align:center;top:294.1px;font-size:14px;line-height:14px;color:#606060;font-weight:400;">C</div>
<div class="t" style="left:106.0px;width:600px;text-align:center;top:294.1px;font-size:14px;line-height:14px;color:#606060;font-weight:400;">D</div>
<div class="t" style="left:176.5px;width:600px;text-align:center;top:294.1px;font-size:14px;line-height:14px;color:#606060;font-weight:400;">E</div>
<div class="t" style="left:246.5px;width:600px;text-align:center;top:294.1px;font-size:14px;line-height:14px;color:#606060;font-weight:400;">F</div>
<div class="t" style="left:317.0px;width:600px;text-align:center;top:294.1px;font-size:14px;line-height:14px;color:#606060;font-weight:400;">G</div>
<div class="t" style="left:387.5px;width:600px;text-align:center;top:294.1px;font-size:14px;line-height:14px;color:#606060;font-weight:400;">H</div>
<div class="t" style="left:458.0px;width:600px;text-align:center;top:294.1px;font-size:14px;line-height:14px;color:#606060;font-weight:400;">I</div>
<div class="t" style="left:528.5px;width:600px;text-align:center;top:294.1px;font-size:14px;line-height:14px;color:#606060;font-weight:400;">J</div>
<div class="t" style="left:598.5px;width:600px;text-align:center;top:294.1px;font-size:14px;line-height:14px;color:#606060;font-weight:400;">K</div>
<div class="t" style="left:669.0px;width:600px;text-align:center;top:294.1px;font-size:14px;line-height:14px;color:#606060;font-weight:400;">L</div>
<div class="t" style="left:739.5px;width:600px;text-align:center;top:294.1px;font-size:14px;line-height:14px;color:#606060;font-weight:400;">M</div>
<div class="t" style="left:810.0px;width:600px;text-align:center;top:294.1px;font-size:14px;line-height:14px;color:#606060;font-weight:400;">N</div>
<div class="t" style="left:-256.5px;width:600px;text-align:center;top:316.1px;font-size:14px;line-height:14px;color:#606060;font-weight:400;">1</div>
<div class="t" style="left:-256.5px;width:600px;text-align:center;top:338.1px;font-size:14px;line-height:14px;color:#606060;font-weight:400;">2</div>
<div class="t" style="left:-256.5px;width:600px;text-align:center;top:360.1px;font-size:14px;line-height:14px;color:#606060;font-weight:400;">3</div>
<div class="t" style="left:-256.5px;width:600px;text-align:center;top:382.1px;font-size:14px;line-height:14px;color:#606060;font-weight:400;">4</div>
<div class="t" style="left:-256.5px;width:600px;text-align:center;top:404.1px;font-size:14px;line-height:14px;color:#606060;font-weight:400;">5</div>
<div class="t" style="left:-256.5px;width:600px;text-align:center;top:426.1px;font-size:14px;line-height:14px;color:#606060;font-weight:400;">6</div>
<div class="t" style="left:-256.5px;width:600px;text-align:center;top:448.1px;font-size:14px;line-height:14px;color:#606060;font-weight:400;">7</div>
<div class="t" style="left:-256.5px;width:600px;text-align:center;top:470.1px;font-size:14px;line-height:14px;color:#606060;font-weight:400;">8</div>
<div class="t" style="left:-256.5px;width:600px;text-align:center;top:492.1px;font-size:14px;line-height:14px;color:#606060;font-weight:400;">9</div>
<div class="t" style="left:-256.5px;width:600px;text-align:center;top:514.1px;font-size:14px;line-height:14px;color:#606060;font-weight:400;">10</div>
<div class="t" style="left:-256.5px;width:600px;text-align:center;top:536.1px;font-size:14px;line-height:14px;color:#606060;font-weight:400;">11</div>
<div class="t" style="left:-256.5px;width:600px;text-align:center;top:558.1px;font-size:14px;line-height:14px;color:#606060;font-weight:400;">12</div>
<div class="t" style="left:-256.5px;width:600px;text-align:center;top:580.1px;font-size:14px;line-height:14px;color:#606060;font-weight:400;">13</div>
<div class="t" style="left:-256.5px;width:600px;text-align:center;top:602.1px;font-size:14px;line-height:14px;color:#606060;font-weight:400;">14</div>
<div class="t" style="left:-256.5px;width:600px;text-align:center;top:624.1px;font-size:14px;line-height:14px;color:#606060;font-weight:400;">15</div>
<div class="t" style="left:166.5px;top:318.1px;font-size:13.5px;line-height:13.5px;color:#111;font-weight:700;">Wild-type</div>
<div class="t" style="left:269.0px;top:318.6px;font-size:13px;line-height:13px;color:#111;font-weight:700;"><i>yfg</i> mutant</div>
<div class="t" style="left:66.5px;top:339.7px;font-size:14px;line-height:14px;color:#111;font-weight:400;">t (min)</div>
<div class="t" style="left:165.5px;top:339.7px;font-size:14px;line-height:14px;color:#111;font-weight:400;">OD 600</div>
<div class="t" style="right:987.0px;text-align:right;top:361.7px;font-size:14px;line-height:14px;color:#111;font-weight:400;">0</div>
<div class="t" style="right:885.5px;text-align:right;top:361.7px;font-size:14px;line-height:14px;color:#111;font-weight:400;">0,1</div>
<div class="t" style="right:779.5px;text-align:right;top:361.7px;font-size:14px;line-height:14px;color:#111;font-weight:400;">0,098</div>
<div class="t" style="right:987.0px;text-align:right;top:383.7px;font-size:14px;line-height:14px;color:#111;font-weight:400;">30</div>
<div class="t" style="right:885.5px;text-align:right;top:383.7px;font-size:14px;line-height:14px;color:#111;font-weight:400;">0,245</div>
<div class="t" style="right:779.5px;text-align:right;top:383.7px;font-size:14px;line-height:14px;color:#111;font-weight:400;">0,123</div>
<div class="t" style="right:987.0px;text-align:right;top:405.7px;font-size:14px;line-height:14px;color:#111;font-weight:400;">60</div>
<div class="t" style="right:885.5px;text-align:right;top:405.7px;font-size:14px;line-height:14px;color:#111;font-weight:400;">0,455</div>
<div class="t" style="right:779.5px;text-align:right;top:405.7px;font-size:14px;line-height:14px;color:#111;font-weight:400;">0,245</div>
<div class="t" style="right:987.0px;text-align:right;top:427.7px;font-size:14px;line-height:14px;color:#111;font-weight:400;">90</div>
<div class="t" style="right:885.5px;text-align:right;top:427.7px;font-size:14px;line-height:14px;color:#111;font-weight:400;">0,98</div>
<div class="t" style="right:779.5px;text-align:right;top:427.7px;font-size:14px;line-height:14px;color:#111;font-weight:400;">0,51</div>
<div class="t" style="right:987.0px;text-align:right;top:449.7px;font-size:14px;line-height:14px;color:#111;font-weight:400;">120</div>
<div class="t" style="right:885.5px;text-align:right;top:449.7px;font-size:14px;line-height:14px;color:#111;font-weight:400;">1,98</div>
<div class="t" style="right:779.5px;text-align:right;top:449.7px;font-size:14px;line-height:14px;color:#111;font-weight:400;">0,99</div>
<div class="t" style="right:987.0px;text-align:right;top:471.7px;font-size:14px;line-height:14px;color:#111;font-weight:400;">150</div>
<div class="t" style="right:885.5px;text-align:right;top:471.7px;font-size:14px;line-height:14px;color:#111;font-weight:400;">3,43</div>
<div class="t" style="right:779.5px;text-align:right;top:471.7px;font-size:14px;line-height:14px;color:#111;font-weight:400;">1,85</div>
<div class="t" style="right:987.0px;text-align:right;top:493.7px;font-size:14px;line-height:14px;color:#111;font-weight:400;">180</div>
<div class="t" style="right:885.5px;text-align:right;top:493.7px;font-size:14px;line-height:14px;color:#111;font-weight:400;">3,755</div>
<div class="t" style="right:779.5px;text-align:right;top:493.7px;font-size:14px;line-height:14px;color:#111;font-weight:400;">3,21</div>
<div class="t" style="right:987.0px;text-align:right;top:515.7px;font-size:14px;line-height:14px;color:#111;font-weight:400;">210</div>
<div class="t" style="right:885.5px;text-align:right;top:515.7px;font-size:14px;line-height:14px;color:#111;font-weight:400;">3,855</div>
<div class="t" style="right:779.5px;text-align:right;top:515.7px;font-size:14px;line-height:14px;color:#111;font-weight:400;">3,671</div>
<div class="t" style="right:987.0px;text-align:right;top:537.7px;font-size:14px;line-height:14px;color:#111;font-weight:400;">240</div>
<div class="t" style="right:885.5px;text-align:right;top:537.7px;font-size:14px;line-height:14px;color:#111;font-weight:400;">3,95</div>
<div class="t" style="right:779.5px;text-align:right;top:537.7px;font-size:14px;line-height:14px;color:#111;font-weight:400;">3,74</div>
<div class="t" style="right:987.0px;text-align:right;top:559.7px;font-size:14px;line-height:14px;color:#111;font-weight:400;">270</div>
<div class="t" style="right:885.5px;text-align:right;top:559.7px;font-size:14px;line-height:14px;color:#111;font-weight:400;">4,01</div>
<div class="t" style="right:779.5px;text-align:right;top:559.7px;font-size:14px;line-height:14px;color:#111;font-weight:400;">3,94</div>
<div class="t" style="right:987.0px;text-align:right;top:581.7px;font-size:14px;line-height:14px;color:#111;font-weight:400;">300</div>
<div class="t" style="right:885.5px;text-align:right;top:581.7px;font-size:14px;line-height:14px;color:#111;font-weight:400;">4,05</div>
<div class="t" style="right:779.5px;text-align:right;top:581.7px;font-size:14px;line-height:14px;color:#111;font-weight:400;">4,01</div>
<div class="t" style="right:987.0px;text-align:right;top:603.7px;font-size:14px;line-height:14px;color:#111;font-weight:400;">330</div>
<div class="t" style="right:885.5px;text-align:right;top:603.7px;font-size:14px;line-height:14px;color:#111;font-weight:400;">3,98</div>
<div class="t" style="right:779.5px;text-align:right;top:603.7px;font-size:14px;line-height:14px;color:#111;font-weight:400;">3,98</div>
<div class="t" style="right:987.0px;text-align:right;top:625.7px;font-size:14px;line-height:14px;color:#111;font-weight:400;">360</div>
<div class="t" style="right:885.5px;text-align:right;top:625.7px;font-size:14px;line-height:14px;color:#111;font-weight:400;">4,1</div>
<div class="t" style="right:779.5px;text-align:right;top:625.7px;font-size:14px;line-height:14px;color:#111;font-weight:400;">3,87</div>
<div style="position:absolute;left:1125px;top:313px;width:16px;height:320px;background:#e6e6e6"></div>
<div style="position:absolute;left:1125px;top:313px;width:14px;height:15px;border:1px solid #b5babf;background:#fff"></div>
<svg style="position:absolute;left:1127px;top:316px" width="12" height="10" viewBox="0 0 12 10"><path d="M2 7.5L6 3L10 7.5Z" fill="#666"/></svg>
<div style="position:absolute;left:1125px;top:330px;width:14px;height:78px;border:1px solid #b5babf;background:#fff"></div>
<div style="position:absolute;left:1125px;top:627px;width:14px;height:15px;border:1px solid #b5babf;background:#fff"></div>
<svg style="position:absolute;left:0;top:0" width="1147" height="633"><rect x="437.5" y="323.5" width="528.8" height="400" fill="#fff" stroke="#23703f" stroke-width="1.6"/></svg>
<svg style="position:absolute;left:0;top:0" width="1147" height="633" viewBox="0 0 1147 633">
<line x1="476.5" y1="570.80" x2="937.5" y2="570.80" stroke="#d9d9d9" stroke-width="1.3"/>
<line x1="476.5" y1="545.13" x2="937.5" y2="545.13" stroke="#d9d9d9" stroke-width="1.3"/>
<line x1="476.5" y1="519.47" x2="937.5" y2="519.47" stroke="#d9d9d9" stroke-width="1.3"/>
<line x1="476.5" y1="493.80" x2="937.5" y2="493.80" stroke="#d9d9d9" stroke-width="1.3"/>
<line x1="476.5" y1="468.13" x2="937.5" y2="468.13" stroke="#d9d9d9" stroke-width="1.3"/>
<line x1="476.5" y1="442.47" x2="937.5" y2="442.47" stroke="#d9d9d9" stroke-width="1.3"/>
<line x1="476.5" y1="416.80" x2="937.5" y2="416.80" stroke="#d9d9d9" stroke-width="1.3"/>
<line x1="476.5" y1="391.13" x2="937.5" y2="391.13" stroke="#d9d9d9" stroke-width="1.3"/>
<line x1="476.5" y1="365.47" x2="937.5" y2="365.47" stroke="#d9d9d9" stroke-width="1.3"/>
<line x1="476.5" y1="339.80" x2="937.5" y2="339.80" stroke="#d9d9d9" stroke-width="1.3"/>
<line x1="476.50" y1="339.8" x2="476.50" y2="570.8" stroke="#d9d9d9" stroke-width="1.3"/>
<line x1="534.12" y1="339.8" x2="534.12" y2="570.8" stroke="#d9d9d9" stroke-width="1.3"/>
<line x1="591.75" y1="339.8" x2="591.75" y2="570.8" stroke="#d9d9d9" stroke-width="1.3"/>
<line x1="649.38" y1="339.8" x2="649.38" y2="570.8" stroke="#d9d9d9" stroke-width="1.3"/>
<line x1="707.00" y1="339.8" x2="707.00" y2="570.8" stroke="#d9d9d9" stroke-width="1.3"/>
<line x1="764.62" y1="339.8" x2="764.62" y2="570.8" stroke="#d9d9d9" stroke-width="1.3"/>
<line x1="822.25" y1="339.8" x2="822.25" y2="570.8" stroke="#d9d9d9" stroke-width="1.3"/>
<line x1="879.88" y1="339.8" x2="879.88" y2="570.8" stroke="#d9d9d9" stroke-width="1.3"/>
<line x1="937.50" y1="339.8" x2="937.50" y2="570.8" stroke="#d9d9d9" stroke-width="1.3"/>
<path d="M476.50 565.67 C482.26 564.43 499.55 561.26 511.07 558.22 C522.60 555.19 534.12 553.73 545.65 547.44 C557.17 541.15 568.70 533.54 580.23 520.49 C591.75 507.45 603.27 490.12 614.80 469.16 C626.32 448.20 637.85 409.91 649.38 394.73 C660.90 379.54 672.43 381.68 683.95 378.04 C695.48 374.41 707.00 374.58 718.52 372.91 C730.05 371.24 741.58 369.36 753.10 368.03 C764.62 366.71 776.15 365.81 787.67 364.95 C799.20 364.10 810.73 362.64 822.25 362.90 C833.77 363.16 845.30 366.92 856.83 366.49 C868.35 366.07 885.64 361.36 891.40 360.33" fill="none" stroke="#5b9bd5" stroke-width="2.3" stroke-linecap="round"/>
<circle cx="476.50" cy="565.67" r="4" fill="#5b9bd5"/>
<circle cx="511.07" cy="558.22" r="4" fill="#5b9bd5"/>
<circle cx="545.65" cy="547.44" r="4" fill="#5b9bd5"/>
<circle cx="580.23" cy="520.49" r="4" fill="#5b9bd5"/>
<circle cx="614.80" cy="469.16" r="4" fill="#5b9bd5"/>
<circle cx="649.38" cy="394.73" r="4" fill="#5b9bd5"/>
<circle cx="683.95" cy="378.04" r="4" fill="#5b9bd5"/>
<circle cx="718.52" cy="372.91" r="4" fill="#5b9bd5"/>
<circle cx="753.10" cy="368.03" r="4" fill="#5b9bd5"/>
<circle cx="787.67" cy="364.95" r="4" fill="#5b9bd5"/>
<circle cx="822.25" cy="362.90" r="4" fill="#5b9bd5"/>
<circle cx="856.83" cy="366.49" r="4" fill="#5b9bd5"/>
<circle cx="891.40" cy="360.33" r="4" fill="#5b9bd5"/>
<path d="M476.50 565.77 C482.26 565.56 499.55 565.74 511.07 564.49 C522.60 563.23 534.12 561.53 545.65 558.22 C557.17 554.91 568.70 550.99 580.23 544.62 C591.75 538.25 603.27 531.44 614.80 519.98 C626.32 508.52 637.85 494.83 649.38 475.83 C660.90 456.84 672.43 421.60 683.95 406.02 C695.48 390.44 707.00 386.89 718.52 382.36 C730.05 377.82 741.58 381.11 753.10 378.81 C764.62 376.51 776.15 370.86 787.67 368.55 C799.20 366.24 810.73 365.30 822.25 364.95 C833.77 364.61 845.30 365.30 856.83 366.49 C868.35 367.69 885.64 371.20 891.40 372.14" fill="none" stroke="#ed7d31" stroke-width="2.3" stroke-linecap="round"/>
<circle cx="476.50" cy="565.77" r="4" fill="#ed7d31"/>
<circle cx="511.07" cy="564.49" r="4" fill="#ed7d31"/>
<circle cx="545.65" cy="558.22" r="4" fill="#ed7d31"/>
<circle cx="580.23" cy="544.62" r="4" fill="#ed7d31"/>
<circle cx="614.80" cy="519.98" r="4" fill="#ed7d31"/>
<circle cx="649.38" cy="475.83" r="4" fill="#ed7d31"/>
<circle cx="683.95" cy="406.02" r="4" fill="#ed7d31"/>
<circle cx="718.52" cy="382.36" r="4" fill="#ed7d31"/>
<circle cx="753.10" cy="378.81" r="4" fill="#ed7d31"/>
<circle cx="787.67" cy="368.55" r="4" fill="#ed7d31"/>
<circle cx="822.25" cy="364.95" r="4" fill="#ed7d31"/>
<circle cx="856.83" cy="366.49" r="4" fill="#ed7d31"/>
<circle cx="891.40" cy="372.14" r="4" fill="#ed7d31"/>
<line x1="626.5" y1="617" x2="655" y2="617" stroke="#5b9bd5" stroke-width="2.3"/><circle cx="641" cy="617" r="4" fill="#5b9bd5"/>
<line x1="710" y1="617" x2="739.5" y2="617" stroke="#ed7d31" stroke-width="2.3"/><circle cx="725" cy="617" r="4" fill="#ed7d31"/>
<circle cx="437.5" cy="323.5" r="4.4" fill="#fff" stroke="#8a8a8a" stroke-width="1.6"/>
<circle cx="966.3" cy="323.5" r="4.4" fill="#fff" stroke="#8a8a8a" stroke-width="1.6"/>
<defs><linearGradient id="hg" x1="0" y1="0" x2="1" y2="1"><stop offset="0" stop-color="#fbfcfe"/><stop offset="1" stop-color="#d3dce8"/></linearGradient></defs>
<rect x="698.5" y="318.9" width="8" height="8" rx="1" fill="url(#hg)" stroke="#8a8a8a" stroke-width="1.5"/>
<rect x="433.5" y="477.8" width="8" height="8" rx="1" fill="url(#hg)" stroke="#8a8a8a" stroke-width="1.5"/>
<rect x="962.3" y="477.8" width="8" height="8" rx="1" fill="url(#hg)" stroke="#8a8a8a" stroke-width="1.5"/>
</svg>
<div class="t" style="right:683.4px;text-align:right;top:564.9px;font-size:12px;line-height:12px;color:#595959;font-weight:400;">0</div>
<div class="t" style="right:683.4px;text-align:right;top:539.2px;font-size:12px;line-height:12px;color:#595959;font-weight:400;">0,5</div>
<div class="t" style="right:683.4px;text-align:right;top:513.6px;font-size:12px;line-height:12px;color:#595959;font-weight:400;">1</div>
<div class="t" style="right:683.4px;text-align:right;top:487.9px;font-size:12px;line-height:12px;color:#595959;font-weight:400;">1,5</div>
<div class="t" style="right:683.4px;text-align:right;top:462.2px;font-size:12px;line-height:12px;color:#595959;font-weight:400;">2</div>
<div class="t" style="right:683.4px;text-align:right;top:436.6px;font-size:12px;line-height:12px;color:#595959;font-weight:400;">2,5</div>
<div class="t" style="right:683.4px;text-align:right;top:410.9px;font-size:12px;line-height:12px;color:#595959;font-weight:400;">3</div>
<div class="t" style="right:683.4px;text-align:right;top:385.2px;font-size:12px;line-height:12px;color:#595959;font-weight:400;">3,5</div>
<div class="t" style="right:683.4px;text-align:right;top:359.6px;font-size:12px;line-height:12px;color:#595959;font-weight:400;">4</div>
<div class="t" style="right:683.4px;text-align:right;top:333.9px;font-size:12px;line-height:12px;color:#595959;font-weight:400;">4,5</div>
<div class="t" style="left:176.5px;width:600px;text-align:center;top:581.4px;font-size:12px;line-height:12px;color:#595959;font-weight:400;">0</div>
<div class="t" style="left:234.1px;width:600px;text-align:center;top:581.4px;font-size:12px;line-height:12px;color:#595959;font-weight:400;">50</div>
<div class="t" style="left:291.8px;width:600px;text-align:center;top:581.4px;font-size:12px;line-height:12px;color:#595959;font-weight:400;">100</div>
<div class="t" style="left:349.4px;width:600px;text-align:center;top:581.4px;font-size:12px;line-height:12px;color:#595959;font-weight:400;">150</div>
<div class="t" style="left:407.0px;width:600px;text-align:center;top:581.4px;font-size:12px;line-height:12px;color:#595959;font-weight:400;">200</div>
<div class="t" style="left:464.6px;width:600px;text-align:center;top:581.4px;font-size:12px;line-height:12px;color:#595959;font-weight:400;">250</div>
<div class="t" style="left:522.2px;width:600px;text-align:center;top:581.4px;font-size:12px;line-height:12px;color:#595959;font-weight:400;">300</div>
<div class="t" style="left:579.9px;width:600px;text-align:center;top:581.4px;font-size:12px;line-height:12px;color:#595959;font-weight:400;">350</div>
<div class="t" style="left:637.5px;width:600px;text-align:center;top:581.4px;font-size:12px;line-height:12px;color:#595959;font-weight:400;">400</div>
<div class="t" style="left:658.3px;top:610.6px;font-size:11.6px;line-height:11.6px;color:#595959;font-weight:400;letter-spacing:-0.25px">Series1</div>
<div class="t" style="left:741.9px;top:610.6px;font-size:11.6px;line-height:11.6px;color:#595959;font-weight:400;letter-spacing:-0.25px">Series2</div>
</body></html>
